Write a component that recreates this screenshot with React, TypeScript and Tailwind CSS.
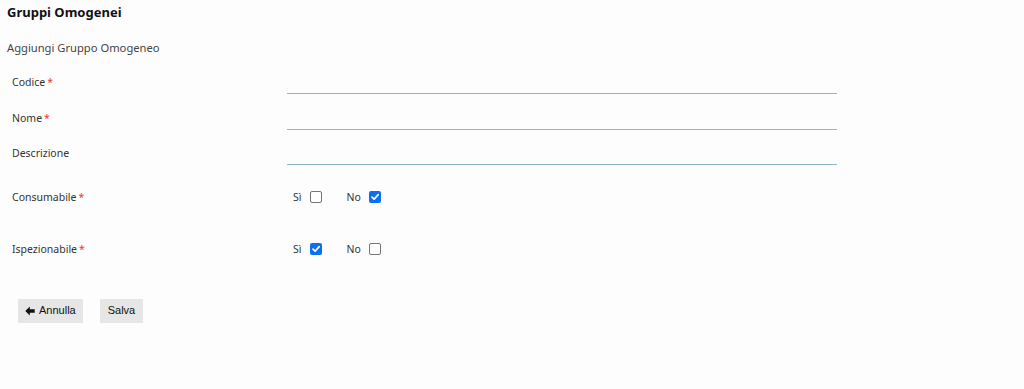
import React from 'react'

const font = { fontFamily: '"Noto Sans", "Open Sans", sans-serif' }

function Box({ checked }: { checked: boolean }) {
  if (checked) {
    return (
      <span className="inline-flex h-[12px] w-[12px] items-center justify-center rounded-[2px] bg-[#0b6ff2]">
        <svg width="10" height="10" viewBox="0 0 10 10" fill="none">
          <path d="M2 5.2 L4.1 7.2 L8.2 2.6" stroke="white" strokeWidth="1.7" strokeLinecap="round" strokeLinejoin="round" />
        </svg>
      </span>
    )
  }
  return <span className="inline-block h-[12px] w-[12px] rounded-[2px] border border-[#767676] bg-white" />
}

function Req() {
  return <span className="ml-[2px] text-[#e53935]">*</span>
}

function TextRow({ label, required }: { label: string; required?: boolean }) {
  return (
    <div className="flex h-[35.5px] items-start">
      <div className="w-[275px] pt-[15px] text-[10.5px] leading-[14px] text-[#333]">
        {label}
        {required && <Req />}
      </div>
      <div className="mt-[33px] h-[1px] w-[550px] bg-[#8fb6c4]" />
    </div>
  )
}

function CheckRow({ label, yes }: { label: string; yes: boolean }) {
  return (
    <div className="flex items-center text-[10.5px] leading-[14px] text-[#333]">
      <div className="w-[275px]">
        {label}
        <Req />
      </div>
      <div className="flex items-center pl-[6px]">
        <span className="mr-[9px]">Sì</span>
        <Box checked={yes} />
        <span className="ml-[24px] mr-[8px]">No</span>
        <Box checked={!yes} />
      </div>
    </div>
  )
}

export default function App() {
  return (
    <div className="min-h-[389px] w-full bg-[#fdfdfd]" style={font}>
      <div className="px-[7px] pt-[3px]">
        <h1 className="text-[13px] font-bold leading-[18px] text-[#111]">Gruppi Omogenei</h1>
        <p className="mt-[19px] text-[11.2px] leading-[16px] text-[#444]">Aggiungi Gruppo Omogeneo</p>
      </div>
      <div className="pl-[12px] pt-[4px]">
        <TextRow label="Codice" required />
        <TextRow label="Nome" required />
        <TextRow label="Descrizione" />
        <div className="mt-[23px] flex flex-col gap-[38px]">
          <CheckRow label="Consumabile" yes={false} />
          <CheckRow label="Ispezionabile" yes={true} />
        </div>
      </div>
      <div className="flex gap-[17px] pl-[18px] pt-[43px]" style={{ fontFamily: '"Liberation Sans", Arial, sans-serif' }}>
        <button className="flex h-[24px] items-center gap-[4px] bg-[#e6e6e6] px-[7px] text-[11px] text-[#111]">
          <svg width="10" height="10" viewBox="0 0 10 10">
            <path d="M0.3 5 L4.8 0.6 L4.8 3.2 L9.7 3.2 L9.7 6.8 L4.8 6.8 L4.8 9.4 Z" fill="#111" />
          </svg>
          Annulla
        </button>
        <button className="h-[24px] bg-[#e6e6e6] px-[8px] text-[11px] text-[#111]">Salva</button>
      </div>
    </div>
  )
}
